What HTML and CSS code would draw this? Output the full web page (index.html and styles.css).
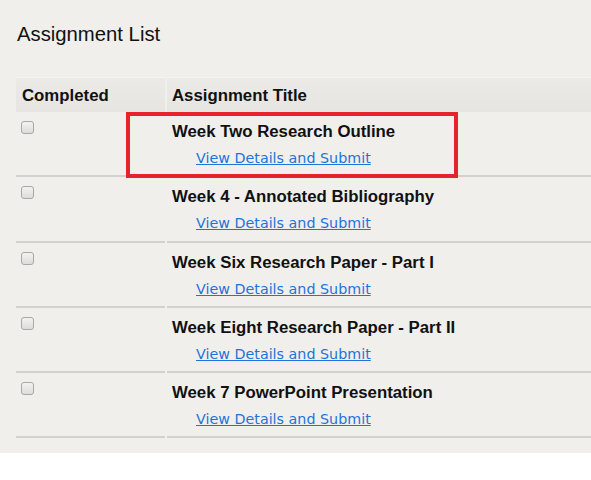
FILE: index.html
```html
<!DOCTYPE html>
<html lang="en">
<head>
<meta charset="utf-8">
<title>Assignment List</title>
<link rel="stylesheet" href="styles.css">
</head>
<body>
<div class="panel">
  <h1 class="page-title">Assignment List</h1>
  <div class="table-wrap">
    <table class="assignments">
      <thead>
        <tr>
          <th class="col-done">Completed</th>
          <th class="col-title">Assignment Title</th>
        </tr>
      </thead>
      <tbody>
        <tr>
          <td class="cell-check"><input type="checkbox" class="check"></td>
          <td class="cell-title"><div class="a-title">Week Two Research Outline</div><a class="a-link" href="#">View Details and Submit</a></td>
        </tr>
        <tr>
          <td class="cell-check"><input type="checkbox" class="check"></td>
          <td class="cell-title"><div class="a-title">Week 4 - Annotated Bibliography</div><a class="a-link" href="#">View Details and Submit</a></td>
        </tr>
        <tr>
          <td class="cell-check"><input type="checkbox" class="check"></td>
          <td class="cell-title"><div class="a-title">Week Six Research Paper - Part I</div><a class="a-link" href="#">View Details and Submit</a></td>
        </tr>
        <tr>
          <td class="cell-check"><input type="checkbox" class="check"></td>
          <td class="cell-title"><div class="a-title">Week Eight Research Paper - Part II</div><a class="a-link" href="#">View Details and Submit</a></td>
        </tr>
        <tr>
          <td class="cell-check"><input type="checkbox" class="check"></td>
          <td class="cell-title"><div class="a-title">Week 7 PowerPoint Presentation</div><a class="a-link" href="#">View Details and Submit</a></td>
        </tr>
      </tbody>
    </table>
    <div class="highlight"></div>
  </div>
</div>
</body>
</html>
```
FILE: styles.css
```css
html, body {
  margin: 0;
  padding: 0;
  background: #ffffff;
  overflow: hidden;
}

body {
  font-family: "Liberation Sans", Arial, sans-serif;
  color: #111111;
}

.panel {
  background: #f0efec;
  padding: 23px 0 15px 0;
  overflow: hidden;
}

.page-title {
  margin: 0 0 31px 17px;
  font-size: 20.3px;
  font-weight: normal;
  line-height: 23px;
  color: #111111;
}

.table-wrap {
  position: relative;
  margin-left: 14px;
}

.assignments {
  border-collapse: separate;
  border-spacing: 2px 0;
  width: 600px;
  table-layout: fixed;
}

.assignments th {
  text-align: left;
  font-size: 16.8px;
  font-weight: bold;
  line-height: 20px;
  padding: 8px 6px 6px 6px;
  background: linear-gradient(#ebeae7, #e6e5e2);
  border-top: 1px solid #f5f4f2;
}

.assignments th.col-title {
  padding-left: 5px;
}

.col-done {
  width: 137px;
}

.assignments td {
  vertical-align: top;
  border-bottom: 2px solid #d2d1ce;
}

.cell-check {
  padding: 9px 0 0 5px;
}

.cell-title {
  padding: 10px 0 7.25px 5px;
}

.check {
  -webkit-appearance: none;
  appearance: none;
  display: block;
  width: 13px;
  height: 13px;
  margin: 0;
  border: 1px solid #a9a8a5;
  border-radius: 3px;
  background: linear-gradient(#f2f2f1, #dddcda);
  box-sizing: border-box;
}

.a-title {
  font-size: 16.8px;
  font-weight: bold;
  line-height: 20px;
}

.a-link {
  display: inline-block;
  margin: 6px 0 0 24px;
  font-family: "DejaVu Sans", Verdana, sans-serif;
  font-size: 14.3px;
  line-height: 20px;
  color: #1f74d9;
  text-decoration: underline;
}

.highlight {
  position: absolute;
  left: 112px;
  top: 35px;
  width: 332px;
  height: 66px;
  box-sizing: border-box;
  border: 4px solid #e6222c;
  pointer-events: none;
}
```
